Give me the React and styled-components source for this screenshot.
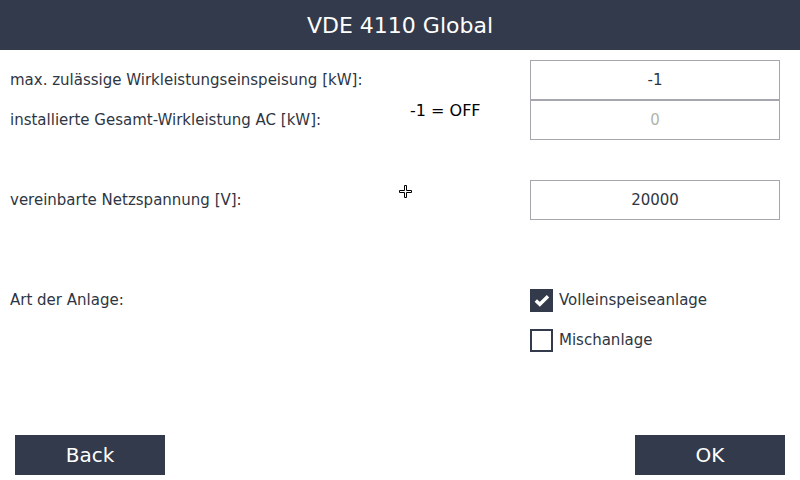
import React from "react";
import styled, { createGlobalStyle } from "styled-components";

const GlobalStyle = createGlobalStyle`
  html, body {
    margin: 0;
    padding: 0;
    background: #ffffff;
  }
  body {
    font-family: "DejaVu Sans", "Liberation Sans", sans-serif;
  }
`;

const Screen = styled.div`
  position: relative;
  width: 800px;
  height: 480px;
  display: flex;
  flex-direction: column;
  overflow: hidden;
  background: #ffffff;
`;

const Header = styled.div`
  height: 50px;
  flex: none;
  background: #323a4b;
  color: #ffffff;
  font-size: 22px;
  display: flex;
  align-items: center;
  justify-content: center;
`;

const Main = styled.div`
  flex: 1;
  padding: 10px 20px 0 10px;
`;

const Group = styled.div`
  display: grid;
  grid-template-columns: 400px 120px 250px;
  grid-auto-rows: 40px;
  align-items: center;
  margin-top: ${(p) => p.$top || 0}px;
`;

const Label = styled.div`
  grid-column: 1;
  font-size: 15px;
  color: #2e3643;
`;

const Note = styled.div`
  grid-column: 2;
  grid-row: 1 / 3;
  align-self: center;
  margin-top: 20px;
  font-size: 16px;
  color: #000000;
`;

const Input = styled.div`
  grid-column: 3;
  height: 40px;
  box-sizing: border-box;
  border: 1px solid #a6a6ae;
  display: flex;
  align-items: center;
  justify-content: center;
  font-size: 15px;
  color: ${(p) => (p.$muted ? "#b0b5ad" : "#2e3643")};
`;

const Check = styled.div`
  grid-column: 3;
  display: flex;
  align-items: center;
  gap: 6px;
  font-size: 15px;
  color: #2e3643;
`;

const Box = styled.div`
  width: 23px;
  height: 23px;
  box-sizing: border-box;
  display: flex;
  align-items: center;
  justify-content: center;
  background: ${(p) => (p.$on ? "#323a4b" : "#ffffff")};
  border: 2px solid #323a4b;
`;

const Footer = styled.div`
  flex: none;
  display: flex;
  justify-content: space-between;
  padding: 0 15px 5px 15px;
`;

const Button = styled.button`
  width: 150px;
  height: 40px;
  border: none;
  background: #323a4b;
  color: #ffffff;
  font-family: "DejaVu Sans", "Liberation Sans", sans-serif;
  font-size: 20px;
  padding: 0;
  cursor: pointer;
`;

const Cursor = styled.svg`
  position: absolute;
  left: 398px;
  top: 184px;
  pointer-events: none;
`;

function Checkbox({ checked, label }) {
  return (
    <Check>
      <Box $on={checked}>
        {checked && (
          <svg width="16" height="13" viewBox="0 0 16 13">
            <path d="M1.8 6.5 L5.8 10.3 L14 2.2" fill="none" stroke="#ffffff" strokeWidth="3.4" />
          </svg>
        )}
      </Box>
      {label}
    </Check>
  );
}

export default function App() {
  return (
    <Screen>
      <GlobalStyle />
      <Header>VDE 4110 Global</Header>
      <Main>
        <Group>
          <Label>max. zulässige Wirkleistungseinspeisung [kW]:</Label>
          <Note>-1 = OFF</Note>
          <Input>-1</Input>
          <Label>installierte Gesamt-Wirkleistung AC [kW]:</Label>
          <Input $muted>0</Input>
        </Group>
        <Group $top={40}>
          <Label>vereinbarte Netzspannung [V]:</Label>
          <Input>20000</Input>
        </Group>
        <Group $top={60}>
          <Label>Art der Anlage:</Label>
          <Checkbox checked label="Volleinspeiseanlage" />
          <Checkbox label="Mischanlage" />
        </Group>
      </Main>
      <Footer>
        <Button>Back</Button>
        <Button>OK</Button>
      </Footer>
      <Cursor width="15" height="15" viewBox="0 0 15 15">
        <path
          d="M6.5 1.5 H8.5 V6.5 H13.5 V8.5 H8.5 V13.5 H6.5 V8.5 H1.5 V6.5 H6.5 Z"
          fill="#ffffff"
          stroke="#000000"
          strokeWidth="1"
        />
      </Cursor>
    </Screen>
  );
}
